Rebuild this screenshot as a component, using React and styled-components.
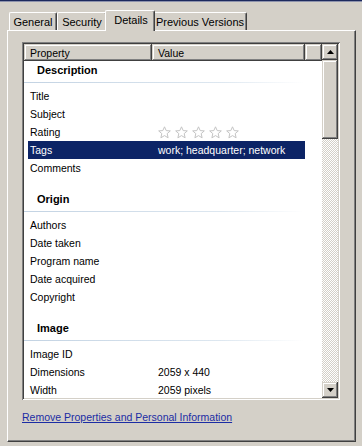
import React from "react";
import styled, { createGlobalStyle } from "styled-components";

const GlobalStyle = createGlobalStyle`
  html, body {
    margin: 0;
    padding: 0;
    background: #d4d0c8;
  }
  body {
    font-family: "Liberation Sans", Arial, sans-serif;
    font-size: 10.5px;
    color: #000;
  }
`;

const raised = `
  box-shadow: inset -1px -1px #404040, inset 1px 1px #d4d0c8,
    inset -2px -2px #808080, inset 2px 2px #ffffff;
`;

const Window = styled.div`
  width: 362px;
  height: 446px;
  display: flex;
  flex-direction: column;
  background: #d4d0c8;
  overflow: hidden;
`;

const TitleEdge = styled.div`
  height: 2px;
  background: linear-gradient(to bottom, #1d2a5e 0 1px, #8e93ad 1px 2px);
`;

const TabStrip = styled.div`
  height: 28px;
  display: flex;
  align-items: flex-end;
  padding-left: 9px;
  position: relative;
  z-index: 1;
`;

const Tab = styled.div`
  width: ${({ $w }) => $w}px;
  height: ${({ $active }) => ($active ? 21 : 18)}px;
  margin: ${({ $active }) => ($active ? "0 -2px -1px -2px" : "0")};
  padding-left: ${({ $active }) => ($active ? 2 : 0)}px;
  box-sizing: border-box;
  display: flex;
  align-items: ${({ $active }) => ($active ? "flex-start" : "center")};
  padding-top: ${({ $active }) => ($active ? 3 : 0)}px;
  justify-content: center;
  font-size: 11px;
  background: #d4d0c8;
  border-top: 1px solid #fff;
  border-left: 1px solid #fff;
  border-right: 1px solid #404040;
  border-top-left-radius: 2px;
  border-top-right-radius: 2px;
  box-shadow: inset -1px 0 #808080;
  white-space: nowrap;
  position: relative;
  z-index: ${({ $active }) => ($active ? 2 : 1)};
`;

const Panel = styled.div`
  margin: 0 6px 0 7px;
  height: 412px;
  box-sizing: border-box;
  border-top: 1px solid #fff;
  border-left: 1px solid #fff;
  border-right: 1px solid #404040;
  border-bottom: 1px solid #404040;
  box-shadow: inset -1px -1px #808080;
  padding: 11px 0 0 14px;
  display: flex;
  flex-direction: column;
`;

const ListBox = styled.div`
  width: 318px;
  height: 358px;
  box-sizing: border-box;
  padding: 2px;
  background: #fff;
  box-shadow: inset 1px 1px #808080, inset -1px -1px #ffffff,
    inset 2px 2px #404040, inset -2px -2px #d4d0c8;
  display: flex;
`;

const Content = styled.div`
  flex: 1;
  display: flex;
  flex-direction: column;
  overflow: hidden;
`;

const HeaderRow = styled.div`
  height: 17px;
  display: grid;
  grid-template-columns: 128px 153px 1fr;
  flex-shrink: 0;
`;

const HeaderCell = styled.div`
  ${raised}
  background: #d4d0c8;
  padding-left: 6px;
  display: flex;
  align-items: center;
`;

const Body = styled.div`
  flex: 1;
  overflow: hidden;
  padding-left: 4px;
`;

const GroupHeader = styled.div`
  padding-top: ${({ $first }) => ($first ? 0 : 13)}px;
  margin-left: -4px;
  padding-bottom: 4px;
`;

const GroupTitle = styled.div`
  height: 18px;
  line-height: 18px;
  font-weight: bold;
  font-size: 11px;
  padding-left: 13px;
`;

const GroupRule = styled.div`
  height: 1px;
  margin-top: 3px;
  width: 280px;
  background: linear-gradient(to right, #c3d3e3, #dde7f0 70%, #ffffff);
`;

const Row = styled.div`
  height: 18px;
  width: 277px;
  display: grid;
  grid-template-columns: 124px 1fr;
  align-items: center;
  background: ${({ $selected }) => ($selected ? "#0c2466" : "transparent")};
  color: ${({ $selected }) => ($selected ? "#fff" : "#000")};
`;

const NameCell = styled.div`
  padding-left: 2px;
  white-space: nowrap;
`;

const ValueCell = styled.div`
  padding-left: 6px;
  white-space: nowrap;
  display: flex;
  gap: 4px;
`;

const ScrollBar = styled.div`
  width: 16px;
  display: flex;
  flex-direction: column;
  flex-shrink: 0;
`;

const ScrollButton = styled.div`
  ${raised}
  width: 16px;
  height: 16px;
  background: #d4d0c8;
  display: flex;
  align-items: center;
  justify-content: center;
  flex-shrink: 0;
`;

const Thumb = styled.div`
  ${raised}
  height: 79px;
  background: #d4d0c8;
  flex-shrink: 0;
`;

const Track = styled.div`
  flex: 1;
  background-image: repeating-conic-gradient(#ffffff 0 25%, #d4d0c8 0 50%);
  background-size: 2px 2px;
`;

const LinkRow = styled.div`
  padding-top: 11px;
`;

const Link = styled.a`
  color: #1b2ca4;
  text-decoration: underline;
  cursor: pointer;
`;

const Arrow = ({ down }) => (
  <svg width="7" height="4" viewBox="0 0 7 4">
    <polygon points={down ? "0,0 7,0 3.5,4" : "3.5,0 7,4 0,4"} fill="#000" />
  </svg>
);

const Star = () => (
  <svg width="13" height="13" viewBox="0 0 13 13">
    <polygon
      points="6.5,0.8 8.2,4.6 12.3,4.9 9.2,7.6 10.1,11.8 6.5,9.6 2.9,11.8 3.8,7.6 0.7,4.9 4.8,4.6"
      fill="#fff"
      stroke="#c4c4c4"
      strokeWidth="1"
      strokeLinejoin="round"
    />
  </svg>
);

const groups = [
  {
    title: "Description",
    rows: [
      { name: "Title" },
      { name: "Subject" },
      { name: "Rating", stars: true },
      { name: "Tags", value: "work; headquarter; network", selected: true },
      { name: "Comments" },
    ],
  },
  {
    title: "Origin",
    rows: [
      { name: "Authors" },
      { name: "Date taken" },
      { name: "Program name" },
      { name: "Date acquired" },
      { name: "Copyright" },
    ],
  },
  {
    title: "Image",
    rows: [
      { name: "Image ID" },
      { name: "Dimensions", value: "2059 x 440" },
      { name: "Width", value: "2059 pixels" },
    ],
  },
];

const tabs = [
  { label: "General", w: 48 },
  { label: "Security", w: 50 },
  { label: "Details", w: 50, active: true },
  { label: "Previous Versions", w: 94 },
];

export default function App() {
  return (
    <>
      <GlobalStyle />
      <Window>
        <TitleEdge />
        <TabStrip>
          {tabs.map((t) => (
            <Tab key={t.label} $w={t.w} $active={t.active}>
              {t.label}
            </Tab>
          ))}
        </TabStrip>
        <Panel>
          <ListBox>
            <Content>
              <HeaderRow>
                <HeaderCell>Property</HeaderCell>
                <HeaderCell>Value</HeaderCell>
                <HeaderCell />
              </HeaderRow>
              <Body>
                {groups.map((g, gi) => (
                  <React.Fragment key={g.title}>
                    <GroupHeader $first={gi === 0}>
                      <GroupTitle>{g.title}</GroupTitle>
                      <GroupRule />
                    </GroupHeader>
                    {g.rows.map((r) => (
                      <Row key={r.name} $selected={r.selected}>
                        <NameCell>{r.name}</NameCell>
                        <ValueCell>
                          {r.stars
                            ? [0, 1, 2, 3, 4].map((i) => <Star key={i} />)
                            : r.value}
                        </ValueCell>
                      </Row>
                    ))}
                  </React.Fragment>
                ))}
              </Body>
            </Content>
            <ScrollBar>
              <ScrollButton>
                <Arrow />
              </ScrollButton>
              <Thumb />
              <Track />
              <ScrollButton>
                <Arrow down />
              </ScrollButton>
            </ScrollBar>
          </ListBox>
          <LinkRow>
            <Link>Remove Properties and Personal Information</Link>
          </LinkRow>
        </Panel>
      </Window>
    </>
  );
}
